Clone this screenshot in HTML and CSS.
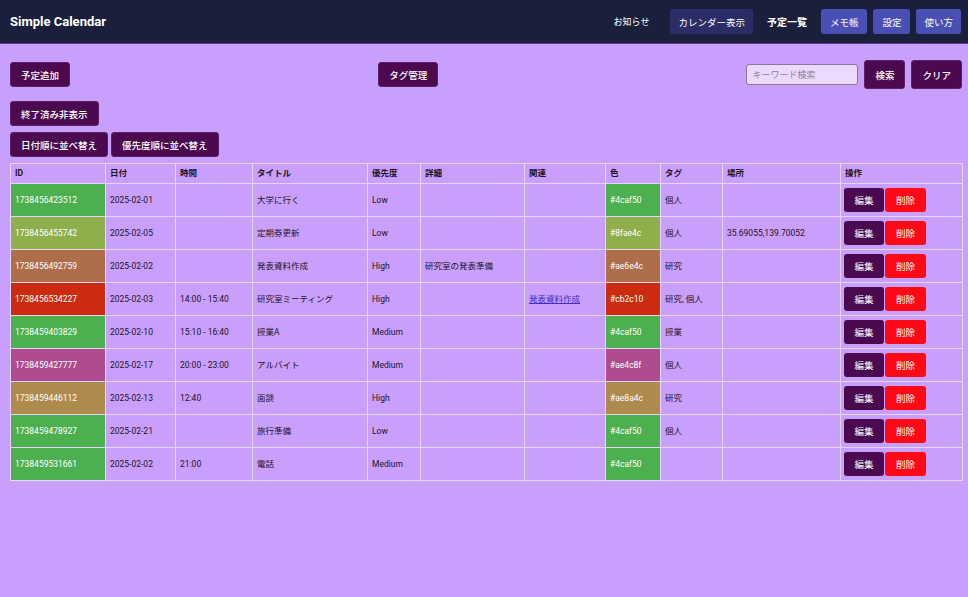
FILE: index.html
```html
<!DOCTYPE html>
<html lang="ja">
<head>
<meta charset="utf-8">
<title>Simple Calendar</title>
<link rel="stylesheet" href="styles.css">
</head>
<body>
<header class="topbar">
  <div class="brand">Simple Calendar</div>
  <nav class="nav">
    <span class="nav-text notice">お知らせ</span>
    <button class="nav-btn nav-dark">カレンダー表示</button>
    <span class="nav-text current">予定一覧</span>
    <button class="nav-btn">メモ帳</button>
    <button class="nav-btn">設定</button>
    <button class="nav-btn nav-last">使い方</button>
  </nav>
</header>
<main class="content">
  <div class="toolbar">
    <button class="btn">予定追加</button>
    <button class="btn">タグ管理</button>
    <div class="search">
      <input class="search-input" type="text" placeholder="キーワード検索">
      <button class="btn btn-tall">検索</button>
      <button class="btn btn-tall">クリア</button>
    </div>
  </div>
  <div class="row-single"><button class="btn">終了済み非表示</button></div>
  <div class="row-sort">
    <button class="btn">日付順に並べ替え</button>
    <button class="btn">優先度順に並べ替え</button>
  </div>
  <table class="events">
    <colgroup>
      <col class="c-id"><col class="c-date"><col class="c-time"><col class="c-title"><col class="c-pri"><col class="c-detail"><col class="c-rel"><col class="c-color"><col class="c-tag"><col class="c-place"><col class="c-ops">
    </colgroup>
    <thead>
      <tr><th>ID</th><th>日付</th><th>時間</th><th>タイトル</th><th>優先度</th><th>詳細</th><th>関連</th><th>色</th><th>タグ</th><th>場所</th><th>操作</th></tr>
    </thead>
    <tbody>
      <tr><td class="sw" style="background:#4caf50">1738456423512</td><td>2025-02-01</td><td></td><td>大学に行く</td><td>Low</td><td></td><td></td><td class="sw" style="background:#4caf50">#4caf50</td><td>個人</td><td></td><td><div class="ops"><button class="op-edit">編集</button><button class="op-del">削除</button></div></td></tr>
      <tr><td class="sw" style="background:#8fae4c">1738456455742</td><td>2025-02-05</td><td></td><td>定期券更新</td><td>Low</td><td></td><td></td><td class="sw" style="background:#8fae4c">#8fae4c</td><td>個人</td><td>35.69055,139.70052</td><td><div class="ops"><button class="op-edit">編集</button><button class="op-del">削除</button></div></td></tr>
      <tr><td class="sw" style="background:#ae6e4c">1738456492759</td><td>2025-02-02</td><td></td><td>発表資料作成</td><td>High</td><td>研究室の発表準備</td><td></td><td class="sw" style="background:#ae6e4c">#ae6e4c</td><td>研究</td><td></td><td><div class="ops"><button class="op-edit">編集</button><button class="op-del">削除</button></div></td></tr>
      <tr><td class="sw" style="background:#cb2c10">1738456534227</td><td>2025-02-03</td><td>14:00 - 15:40</td><td>研究室ミーティング</td><td>High</td><td></td><td><a class="rel-link" href="#">発表資料作成</a></td><td class="sw" style="background:#cb2c10">#cb2c10</td><td>研究, 個人</td><td></td><td><div class="ops"><button class="op-edit">編集</button><button class="op-del">削除</button></div></td></tr>
      <tr><td class="sw" style="background:#4caf50">1738459403829</td><td>2025-02-10</td><td>15:10 - 16:40</td><td>授業A</td><td>Medium</td><td></td><td></td><td class="sw" style="background:#4caf50">#4caf50</td><td>授業</td><td></td><td><div class="ops"><button class="op-edit">編集</button><button class="op-del">削除</button></div></td></tr>
      <tr><td class="sw" style="background:#ae4c8f">1738459427777</td><td>2025-02-17</td><td>20:00 - 23:00</td><td>アルバイト</td><td>Medium</td><td></td><td></td><td class="sw" style="background:#ae4c8f">#ae4c8f</td><td>個人</td><td></td><td><div class="ops"><button class="op-edit">編集</button><button class="op-del">削除</button></div></td></tr>
      <tr><td class="sw" style="background:#ae8a4c">1738459446112</td><td>2025-02-13</td><td>12:40</td><td>面談</td><td>High</td><td></td><td></td><td class="sw" style="background:#ae8a4c">#ae8a4c</td><td>研究</td><td></td><td><div class="ops"><button class="op-edit">編集</button><button class="op-del">削除</button></div></td></tr>
      <tr><td class="sw" style="background:#4caf50">1738459478927</td><td>2025-02-21</td><td></td><td>旅行準備</td><td>Low</td><td></td><td></td><td class="sw" style="background:#4caf50">#4caf50</td><td>個人</td><td></td><td><div class="ops"><button class="op-edit">編集</button><button class="op-del">削除</button></div></td></tr>
      <tr><td class="sw" style="background:#4caf50">1738459531661</td><td>2025-02-02</td><td>21:00</td><td>電話</td><td>Medium</td><td></td><td></td><td class="sw" style="background:#4caf50">#4caf50</td><td></td><td></td><td><div class="ops"><button class="op-edit">編集</button><button class="op-del">削除</button></div></td></tr>
    </tbody>
  </table>
</main>
</body>
</html>
```
FILE: styles.css
```css
* { box-sizing: border-box; }
html, body { margin: 0; padding: 0; }
body {
  background: #c99ffd;
  font-family: Roboto, "Noto Sans CJK JP", sans-serif;
  color: #1c1424;
  min-height: 597px;
}
button { font-family: inherit; cursor: pointer; }

.topbar {
  height: 44px;
  background: #1a1f3b;
  border-bottom: 1px solid #5b3f8c;
  display: flex;
  align-items: center;
  justify-content: space-between;
  padding: 0 7px 0 10px;
}
.brand {
  color: #ffffff;
  font-size: 13px;
  font-weight: 700;
}
.nav { display: flex; align-items: center; }
.nav-text { color: #ffffff; font-size: 9px; }
.notice { margin-right: 21px; }
.current { font-size: 10px; font-weight: 700; margin: 0 14px; }
.nav-btn {
  height: 25px;
  padding: 0 9px;
  border: none;
  border-radius: 3px;
  background: #4a4fb3;
  color: #ffffff;
  font-size: 9.5px;
  font-weight: 400;
  margin-left: 6px;
}
.nav-btn.nav-last { padding: 0 8px; }
.nav-btn.nav-dark { background: #2b2d66; margin-left: 0; padding: 0 8px; }
.current + .nav-btn { margin-left: 0; }

.content { padding: 16px 6px 0 10px; }

.btn {
  height: 25px;
  padding: 0 10px;
  border: 1px solid #5d1f68;
  border-radius: 3px;
  background: #4b0a50;
  color: #ffffff;
  font-size: 9.5px;
  font-weight: 500;
}
.btn-tall { height: 29px; padding: 0 10px; }

.toolbar {
  display: flex;
  align-items: center;
  justify-content: space-between;
  height: 29px;
}
.search { display: flex; align-items: center; gap: 6px; }
.search-input {
  width: 112px;
  height: 21px;
  border: 1px solid #8a7a96;
  border-radius: 3px;
  background: #ebd9ff;
  font-family: inherit;
  font-size: 9px;
  padding: 0 5px;
}
.search-input::placeholder { color: #8e8496; }

.row-single { margin-top: 12px; }
.row-sort { margin-top: 6px; display: flex; gap: 3px; }

.events {
  margin-top: 6px;
  width: 952px;
  table-layout: fixed;
  border-collapse: collapse;
  font-size: 8.5px;
  color: #1c1424;
  border: 1px solid #e6d6fc;
}
.c-id { width: 95px; }
.c-date { width: 70px; }
.c-time { width: 77px; }
.c-title { width: 115px; }
.c-pri { width: 53px; }
.c-detail { width: 104px; }
.c-rel { width: 81px; }
.c-color { width: 55px; }
.c-tag { width: 62px; }
.c-place { width: 118px; }
.c-ops { width: 122px; }

.events th, .events td {
  border: 1px solid #e6d6fc;
  text-align: left;
  white-space: nowrap;
  overflow: hidden;
  color: #1c1424;
}
.events th {
  font-weight: 700;
  padding: 5px 4px;
  line-height: 9px;
}
.events td {
  padding: 4px 3px 4px 4px;
  height: 32.75px;
  line-height: 10px;
}
.events td.sw { color: #ffffff; }
.events td .rel-link { color: #3b2fd0; text-decoration: underline; }

.ops { display: flex; gap: 1px; margin-left: -1px; }
.op-edit, .op-del {
  height: 24px;
  border: none;
  border-radius: 3px;
  color: #ffffff;
  font-size: 9.5px;
  padding: 0;
}
.op-edit { width: 40px; background: #4b0a50; }
.op-del { width: 41px; background: #ff0a14; }
```
